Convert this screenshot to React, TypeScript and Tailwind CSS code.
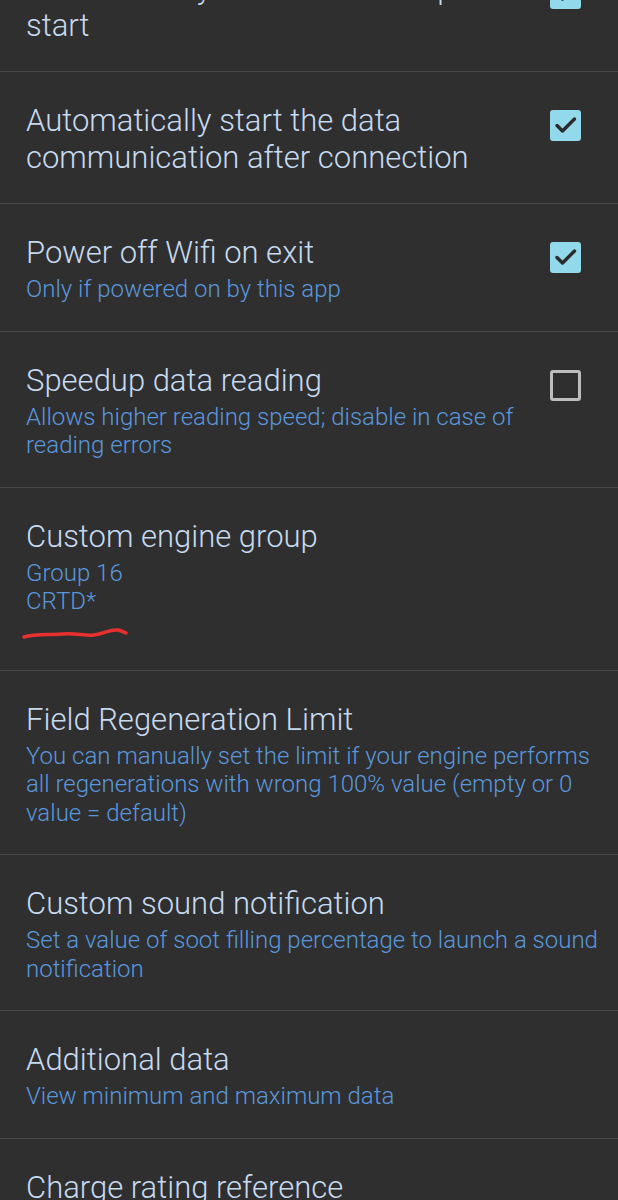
import React from 'react';

type Pref = {
  title: string;
  summary?: string[];
  checked?: boolean;
  mark?: boolean;
};

const prefs: Pref[] = [
  { title: 'Automatically connect the adapter on start', checked: true },
  { title: 'Automatically start the data communication after connection', checked: true },
  { title: 'Power off Wifi on exit', summary: ['Only if powered on by this app'], checked: true },
  {
    title: 'Speedup data reading',
    summary: ['Allows higher reading speed; disable in case of reading errors'],
    checked: false,
  },
  { title: 'Custom engine group', summary: ['Group 16', 'CRTD*'], mark: true },
  {
    title: 'Field Regeneration Limit',
    summary: [
      'You can manually set the limit if your engine performs all regenerations with wrong 100% value (empty or 0 value = default)',
    ],
  },
  {
    title: 'Custom sound notification',
    summary: ['Set a value of soot filling percentage to launch a sound notification'],
  },
  { title: 'Additional data', summary: ['View minimum and maximum data'] },
  { title: 'Charge rating reference', summary: ['Select the reference'] },
];

function CheckBox({ checked }: { checked: boolean }) {
  if (!checked) {
    return <div className="w-[31px] h-[31px] rounded-[3px] border-[3px] border-[#bdbdbd]" />;
  }
  return (
    <div className="w-[31px] h-[31px] rounded-[3px] bg-[#93d9ec] flex items-center justify-center">
      <svg width="31" height="31" viewBox="0 0 31 31">
        <path d="M7 15.5l5.5 5.5L24.5 9" fill="none" stroke="#2b2b2b" strokeWidth="3.4" strokeLinecap="round" strokeLinejoin="round" />
      </svg>
    </div>
  );
}

function Row({ pref }: { pref: Pref }) {
  return (
    <div className="flex items-start pl-[26px] pr-[14px] pt-[30px] pb-[27px] border-b border-[#484848]">
      <div className="flex-1 min-w-0">
        <div className="text-[31px] leading-[37px] font-light text-[#c6daf0]">{pref.title}</div>
        {pref.summary && (
          <div className="mt-[4px] text-[24px] leading-[28.5px] font-light text-[#5a97dc]">
            {pref.summary.map((line, i) => (
              <div key={i}>{line}</div>
            ))}
          </div>
        )}
        {pref.mark && (
          <svg className="mt-[11px] block -ml-[4px]" width="110" height="16" viewBox="0 0 110 16">
            <path
              d="M2 10 C12 7, 25 8, 40 7 C55 6, 62 9, 72 8 C82 7, 88 2, 96 3 C100 4, 102 5, 104 6"
              fill="none"
              stroke="#e8312f"
              strokeWidth="3.5"
              strokeLinecap="round"
            />
          </svg>
        )}
      </div>
      {pref.checked !== undefined && (
        <div className="shrink-0 ml-[6px] mt-[8px] mr-[23px]">
          <CheckBox checked={pref.checked} />
        </div>
      )}
    </div>
  );
}

export default function App() {
  return (
    <div
      className="w-[618px] h-[1200px] overflow-hidden bg-[#2f2f2f]"
      style={{ fontFamily: 'Roboto, "Noto Sans", sans-serif' }}
    >
      <div className="-mt-[60px]">
        {prefs.map((p) => (
          <Row key={p.title} pref={p} />
        ))}
      </div>
    </div>
  );
}
